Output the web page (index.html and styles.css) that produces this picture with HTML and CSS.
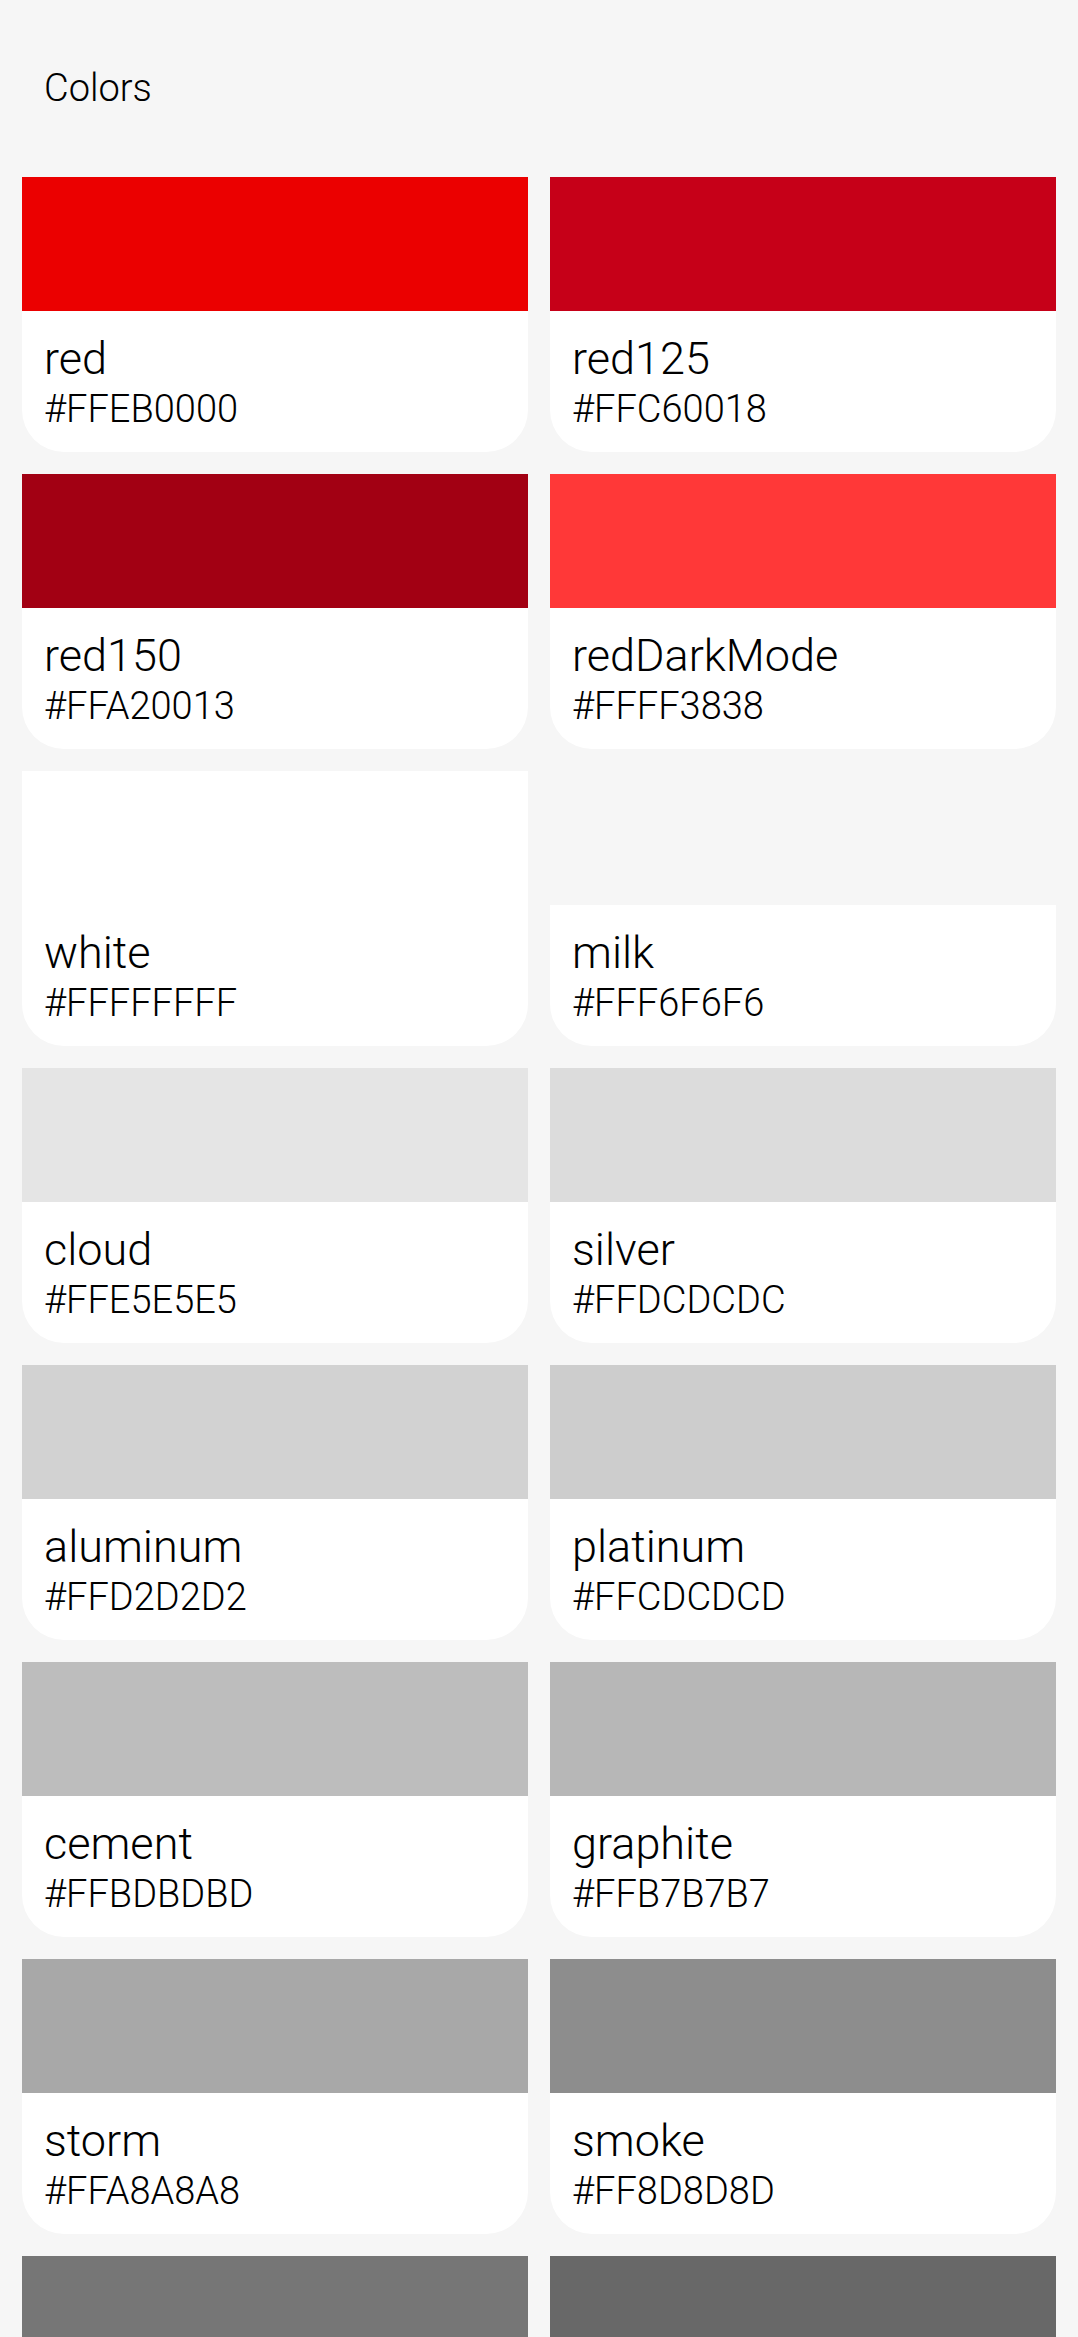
FILE: index.html
```html
<!DOCTYPE html>
<html lang="en">
<head>
<meta charset="utf-8">
<title>Colors</title>
<link rel="stylesheet" href="styles.css">
</head>
<body>
<main class="page">
  <h1 class="title">Colors</h1>
  <div class="grid">
    <div class="card"><div class="swatch" style="background:#EB0000"></div><div class="info"><div class="name">red</div><div class="hex">#FFEB0000</div></div></div>
    <div class="card"><div class="swatch" style="background:#C60018"></div><div class="info"><div class="name">red125</div><div class="hex">#FFC60018</div></div></div>
    <div class="card"><div class="swatch" style="background:#A20013"></div><div class="info"><div class="name">red150</div><div class="hex">#FFA20013</div></div></div>
    <div class="card"><div class="swatch" style="background:#FF3838"></div><div class="info"><div class="name">redDarkMode</div><div class="hex">#FFFF3838</div></div></div>
    <div class="card"><div class="swatch" style="background:#FFFFFF"></div><div class="info"><div class="name">white</div><div class="hex">#FFFFFFFF</div></div></div>
    <div class="card"><div class="swatch" style="background:#F6F6F6"></div><div class="info"><div class="name">milk</div><div class="hex">#FFF6F6F6</div></div></div>
    <div class="card"><div class="swatch" style="background:#E5E5E5"></div><div class="info"><div class="name">cloud</div><div class="hex">#FFE5E5E5</div></div></div>
    <div class="card"><div class="swatch" style="background:#DCDCDC"></div><div class="info"><div class="name">silver</div><div class="hex">#FFDCDCDC</div></div></div>
    <div class="card"><div class="swatch" style="background:#D2D2D2"></div><div class="info"><div class="name">aluminum</div><div class="hex">#FFD2D2D2</div></div></div>
    <div class="card"><div class="swatch" style="background:#CDCDCD"></div><div class="info"><div class="name">platinum</div><div class="hex">#FFCDCDCD</div></div></div>
    <div class="card"><div class="swatch" style="background:#BDBDBD"></div><div class="info"><div class="name">cement</div><div class="hex">#FFBDBDBD</div></div></div>
    <div class="card"><div class="swatch" style="background:#B7B7B7"></div><div class="info"><div class="name">graphite</div><div class="hex">#FFB7B7B7</div></div></div>
    <div class="card"><div class="swatch" style="background:#A8A8A8"></div><div class="info"><div class="name">storm</div><div class="hex">#FFA8A8A8</div></div></div>
    <div class="card"><div class="swatch" style="background:#8D8D8D"></div><div class="info"><div class="name">smoke</div><div class="hex">#FF8D8D8D</div></div></div>
    <div class="card"><div class="swatch" style="background:#767676"></div><div class="info"><div class="name">metal</div><div class="hex">#FF767676</div></div></div>
    <div class="card"><div class="swatch" style="background:#686868"></div><div class="info"><div class="name">granite</div><div class="hex">#FF686868</div></div></div>
  </div>
</main>
</body>
</html>
```
FILE: styles.css
```css
html, body {
  margin: 0;
  padding: 0;
  background: #F6F6F6;
}
body {
  font-family: "Roboto Light", Roboto, "Liberation Sans", sans-serif;
  font-weight: 300;
  color: #000;
}
.page {
  padding: 65px 22px 0;
}
.title {
  margin: 0 0 65px;
  padding-left: 22px;
  font-size: 38px;
  line-height: 47px;
  font-weight: 300;
}
.grid {
  display: grid;
  grid-template-columns: 1fr 1fr;
  gap: 22px;
}
.card {
  background: #fff;
  border-radius: 0 0 42px 42px;
  overflow: hidden;
}
.swatch {
  height: 134px;
}
.info {
  padding: 20px 22px;
}
.name {
  font-size: 45px;
  line-height: 55px;
}
.hex {
  font-size: 38px;
  line-height: 46px;
}
```
